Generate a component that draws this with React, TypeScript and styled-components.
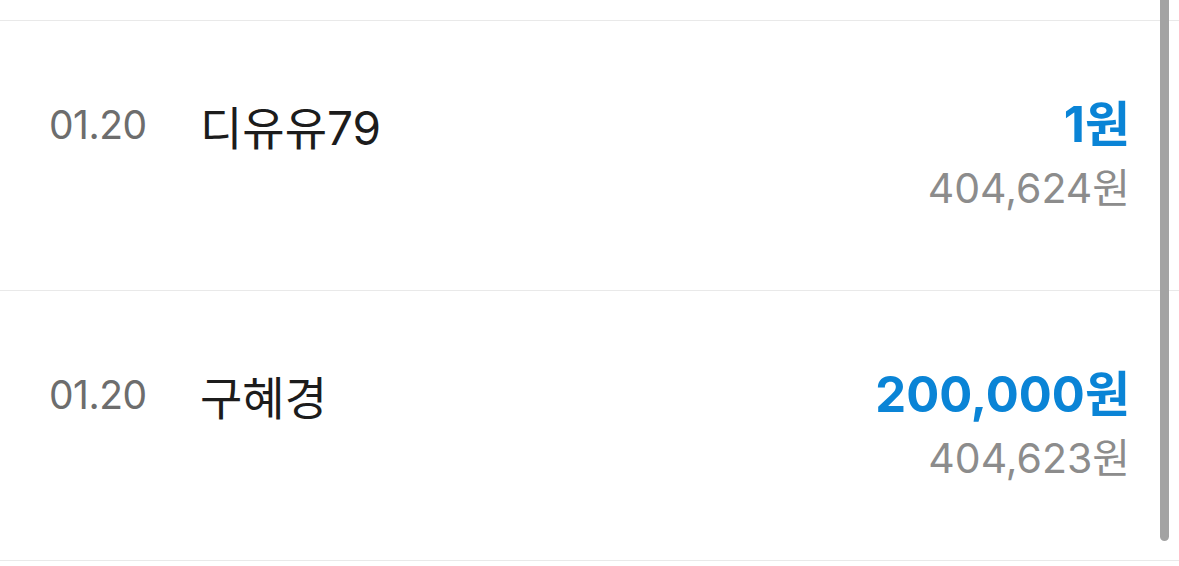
import styled, { createGlobalStyle } from 'styled-components';

const GlobalStyle = createGlobalStyle`
    html, body {
        margin: 0;
        padding: 0;
        background: #ffffff;
        font-family: Inter, 'Noto Sans CJK KR', sans-serif;
        overflow: hidden;
    }
`;

type Tx = {
    date: string;
    name: string;
    amount: string;
    balance: string;
};

const items: Tx[] = [
    { date: '01.20', name: '디유유79', amount: '1원', balance: '404,624원' },
    { date: '01.20', name: '구혜경', amount: '200,000원', balance: '404,623원' },
];

const App = () => {
    return (
        <>
            <GlobalStyle />
            <Page>
                <List>
                    {items.map((tx, i) => (
                        <Row key={i}>
                            <Date>{tx.date}</Date>
                            <Name>{tx.name}</Name>
                            <Amounts>
                                <Amount>{tx.amount}</Amount>
                                <Balance>{tx.balance}</Balance>
                            </Amounts>
                        </Row>
                    ))}
                </List>
                <Scrollbar />
            </Page>
        </>
    );
};

const Page = styled.div`
    position: relative;
    width: 1179px;
    height: 566px;
    overflow: hidden;
`;

const List = styled.ul`
    list-style: none;
    margin: 20px 0 0;
    padding: 0;
    border-top: 1px solid #e9e9e9;
`;

const Row = styled.li`
    display: flex;
    align-items: center;
    height: 269px;
    padding: 0 49px 0 49px;
    border-bottom: 1px solid #e9e9e9;
`;

const Date = styled.span`
    width: 151px;
    margin-top: -62px;
    font-size: 39px;
    color: #6d6d6d;
    letter-spacing: -0.5px;
`;

const Name = styled.span`
    flex: 1;
    margin-top: -62px;
    font-size: 46px;
    color: #1c1c1c;
`;

const Amounts = styled.div`
    display: flex;
    flex-direction: column;
    align-items: flex-end;
    gap: 5px;
    margin-top: 2px;
`;

const Amount = styled.span`
    font-size: 49px;
    font-weight: 700;
    color: #0a84d6;
    line-height: 58px;
`;

const Balance = styled.span`
    font-size: 41px;
    color: #8c8c8c;
    line-height: 58px;
`;

const Scrollbar = styled.div`
    position: absolute;
    top: 0;
    right: 10px;
    width: 9px;
    height: 541px;
    border-radius: 0 0 5px 5px;
    background: #a3a3a3;
`;

export default App;
